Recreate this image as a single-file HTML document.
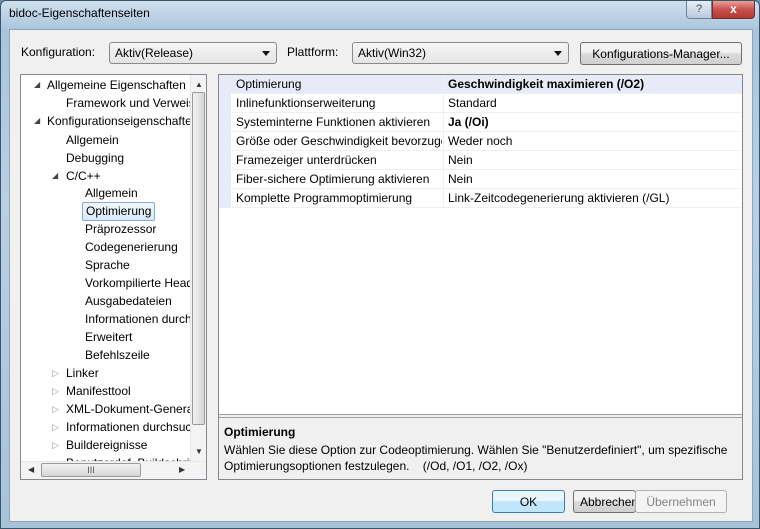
<!DOCTYPE html>
<html><head><style>
*{margin:0;padding:0;box-sizing:border-box}
body{width:760px;height:529px;overflow:hidden;font-family:"Liberation Sans",sans-serif;font-size:12px;color:#000;background:#6a8fb0}
.win{position:absolute;left:0;top:0;width:760px;height:529px;background:linear-gradient(#cfe0ee,#a9c4dc 30px,#b9d0e4 200px,#a8c2da);border:1px solid #3b5468;border-radius:6px 6px 0 0}
.title{position:absolute;left:8px;top:5px;font-size:12px}
.client{position:absolute;left:8px;top:28px;width:744px;height:493px;background:#f0f0f0;border:1px solid #8ea4b8}
.abs{position:absolute}
.combo{position:absolute;height:22px;border:1px solid #8a8a8a;border-radius:3px;background:linear-gradient(#f6f6f6,#e4e4e4);padding:3px 5px}
.combo:after{content:"";position:absolute;right:6px;top:8px;border:4px solid transparent;border-top:5px solid #111;border-bottom:0}
.btn{position:absolute;height:23px;border:1px solid #707070;border-radius:3px;background:linear-gradient(#f2f2f2 45%,#dcdcdc 50%,#cfcfcf);text-align:center;padding-top:4px}
.tree{position:absolute;left:19px;top:73px;width:187px;height:406px;border:1px solid #828790;background:#fff;overflow:hidden}
.tree div{position:absolute;white-space:nowrap;height:18px;line-height:18px}
.grid{position:absolute;left:217px;top:73px;width:525px;height:406px;border:1px solid #828790;background:#fff;overflow:hidden}
.row{position:absolute;left:12px;width:511px;height:19px;line-height:18px;border-bottom:1px solid #f0f0f0}
.row span{position:absolute;left:5px}
.row b,.row i{position:absolute;left:217px;font-style:normal;white-space:nowrap}
.row .v{position:absolute;left:212px;top:0;width:1px;height:19px;background:#f0f0f0}
</style></head><body>
<div class="win">
<div class="title">bidoc-Eigenschaftenseiten</div>
<div class="abs" style="left:685px;top:0;width:26px;height:18px;border:1px solid #6b8299;border-top:0;border-radius:0 0 0 4px;background:linear-gradient(#e6eef6,#b8cadb);text-align:center;color:#3c4c5c;font-size:11px;line-height:17px">?</div>
<div class="abs" style="left:711px;top:0;width:43px;height:18px;border:1px solid #6b3030;border-top:0;border-radius:0 0 4px 0;background:linear-gradient(#e8a196,#c75050 50%,#b43a2c);text-align:center;color:#fff;font-weight:bold;font-size:12px;line-height:17px">x</div>
<div class="client"></div>
<div class="abs" style="left:20px;top:44px">Konfiguration:</div>
<div class="combo" style="left:108px;top:41px;width:168px">Aktiv(Release)</div>
<div class="abs" style="left:286px;top:44px">Plattform:</div>
<div class="combo" style="left:351px;top:41px;width:217px">Aktiv(Win32)</div>
<div class="btn" style="left:579px;top:41px;width:162px">Konfigurations-Manager...</div>

<div class="tree">
<div style="left:26px;top:1px">Allgemeine Eigenschaften</div>
<div style="left:45px;top:19px">Framework und Verweise</div>
<div style="left:26px;top:37px">Konfigurationseigenschaften</div>
<div style="left:45px;top:56px">Allgemein</div>
<div style="left:45px;top:74px">Debugging</div>
<div style="left:45px;top:92px">C/C++</div>
<div style="left:64px;top:109px">Allgemein</div>
<div style="left:61px;top:127px;height:19px;padding:0 3px;border:1px solid #84acdd;border-radius:2px;background:linear-gradient(#f2f7fd,#dbe9f9);line-height:17px">Optimierung</div>
<div style="left:64px;top:145px">Präprozessor</div>
<div style="left:64px;top:163px">Codegenerierung</div>
<div style="left:64px;top:181px">Sprache</div>
<div style="left:64px;top:199px">Vorkompilierte Header</div>
<div style="left:64px;top:217px">Ausgabedateien</div>
<div style="left:64px;top:235px">Informationen durchsuchen</div>
<div style="left:64px;top:253px">Erweitert</div>
<div style="left:64px;top:271px">Befehlszeile</div>
<div style="left:45px;top:289px">Linker</div>
<div style="left:45px;top:307px">Manifesttool</div>
<div style="left:45px;top:325px">XML-Dokument-Generator</div>
<div style="left:45px;top:343px">Informationen durchsuchen</div>
<div style="left:45px;top:361px">Buildereignisse</div>
<div style="left:45px;top:379px">Benutzerdef. Buildschritt</div>
<div style="left:13px;top:1px;color:#444;font-size:8px">◢</div>
<div style="left:13px;top:37px;color:#444;font-size:8px">◢</div>
<div style="left:31px;top:92px;color:#444;font-size:8px">◢</div>
<div style="left:31px;top:289px;color:#999;font-size:9px">▷</div>
<div style="left:31px;top:307px;color:#999;font-size:9px">▷</div>
<div style="left:31px;top:325px;color:#999;font-size:9px">▷</div>
<div style="left:31px;top:343px;color:#999;font-size:9px">▷</div>
<div style="left:31px;top:361px;color:#999;font-size:9px">▷</div>
<div style="left:169px;top:0;width:17px;height:386px;background:#f3f3f3;border-left:1px solid #e6e6e6"></div>
<div style="left:171px;top:17px;width:13px;height:333px;border:1px solid #9a9a9a;border-radius:2px;background:linear-gradient(90deg,#f2f2f2,#d6d6d6)"></div>
<div style="left:174px;top:1px;font-size:8px;color:#333">▲</div>
<div style="left:174px;top:368px;font-size:8px;color:#333">▼</div>
<div style="left:0;top:386px;width:186px;height:18px;background:#f3f3f3;border-top:1px solid #e6e6e6"></div>
<div style="left:20px;top:388px;width:100px;height:14px;border:1px solid #9a9a9a;border-radius:2px;background:linear-gradient(#f2f2f2,#d6d6d6);text-align:center;line-height:12px;font-size:9px;color:#555">III</div>
<div style="left:7px;top:386px;font-size:8px;color:#333">◀</div>
<div style="left:158px;top:386px;font-size:8px;color:#333">▶</div>
</div>

<div class="grid">
<div class="abs" style="left:0;top:0;width:12px;height:133px;background:#e8ebf7"></div>
<div class="row" style="top:0;background:#e8ebf7"><span>Optimierung</span><div class="v"></div><b>Geschwindigkeit maximieren (/O2)</b></div>
<div class="row" style="top:19px"><span>Inlinefunktionserweiterung</span><div class="v"></div><i>Standard</i></div>
<div class="row" style="top:38px"><span>Systeminterne Funktionen aktivieren</span><div class="v"></div><b>Ja (/Oi)</b></div>
<div class="row" style="top:57px;overflow:hidden"><span style="width:206px;overflow:hidden;white-space:nowrap">Größe oder Geschwindigkeit bevorzugen</span><div class="v"></div><i>Weder noch</i></div>
<div class="row" style="top:76px"><span>Framezeiger unterdrücken</span><div class="v"></div><i>Nein</i></div>
<div class="row" style="top:95px"><span>Fiber-sichere Optimierung aktivieren</span><div class="v"></div><i>Nein</i></div>
<div class="row" style="top:114px"><span>Komplette Programmoptimierung</span><div class="v"></div><i>Link-Zeitcodegenerierung aktivieren (/GL)</i></div>
<div class="abs" style="left:0;top:342px;width:523px;height:62px;background:#f0f0f0;border-top:1px solid #a0a0a0"></div>
<div class="abs" style="left:0;top:339px;width:523px;height:3px;background:#f0f0f0;border-top:1px solid #a0a0a0"></div>
<div class="abs" style="left:5px;top:350px;font-weight:bold">Optimierung</div>
<div class="abs" style="left:5px;top:368px;white-space:nowrap">Wählen Sie diese Option zur Codeoptimierung. Wählen Sie "Benutzerdefiniert", um spezifische</div>
<div class="abs" style="left:5px;top:384px;white-space:nowrap">Optimierungsoptionen festzulegen. &nbsp;&nbsp;&nbsp;(/Od, /O1, /O2, /Ox)</div>
</div>

<div class="btn" style="left:491px;top:489px;width:73px;border-color:#3c7fb1;background:linear-gradient(#eaf6fd 45%,#c4e5f6 50%,#bee6fd)">OK</div>
<div class="btn" style="left:572px;top:489px;width:63px;text-align:left;padding-left:6px;overflow:hidden">Abbrechen</div>
<div class="btn" style="left:634px;top:489px;width:92px;background:#f4f4f4;border-color:#adb2b5;color:#838383">Übernehmen</div>
</div>
</body></html>
